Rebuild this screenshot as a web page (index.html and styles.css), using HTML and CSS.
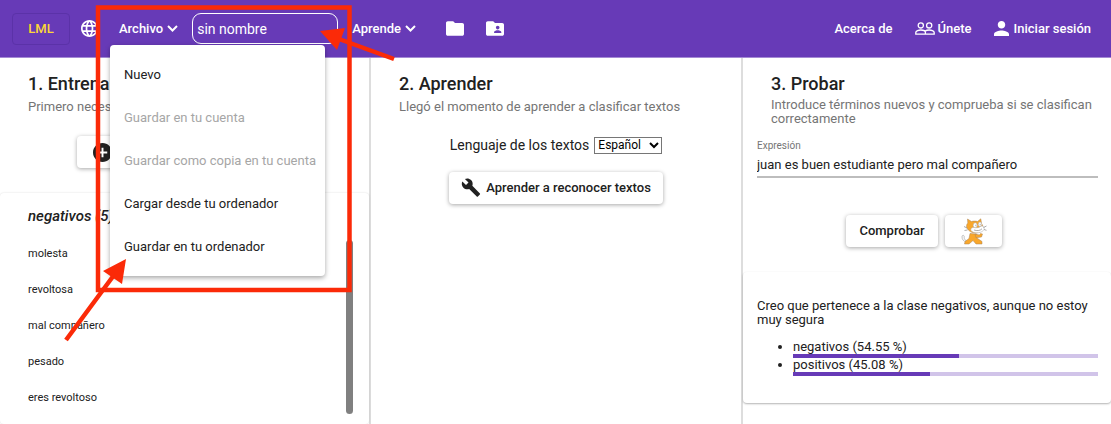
FILE: index.html
```html
<!DOCTYPE html>
<html lang="es">
<head>
<meta charset="utf-8">
<meta name="viewport" content="width=device-width, initial-scale=1">
<title>LML</title>
<link rel="stylesheet" href="styles.css">
</head>
<body>
<div class="page">
  <header class="topbar">
    <nav class="nav nav-main">
      <button class="logo" type="button">LML</button>
      <button class="icon-btn globe-btn" type="button" aria-label="Idioma">
        <svg class="globe" viewBox="2 2 20 20"><path d="M11.99 2C6.47 2 2 6.48 2 12s4.47 10 9.99 10C17.52 22 22 17.52 22 12S17.52 2 11.99 2zm6.93 6h-2.95a15.65 15.65 0 0 0-1.38-3.56A8.03 8.03 0 0 1 18.92 8zM12 4.04c.83 1.2 1.48 2.53 1.91 3.96h-3.82c.43-1.43 1.08-2.76 1.91-3.96zM4.26 14C4.1 13.36 4 12.69 4 12s.1-1.36.26-2h3.38c-.08.66-.14 1.32-.14 2s.06 1.34.14 2H4.26zm.82 2h2.95c.32 1.25.78 2.45 1.38 3.56A7.987 7.987 0 0 1 5.08 16zm2.95-8H5.08a7.987 7.987 0 0 1 4.33-3.56A15.65 15.65 0 0 0 8.03 8zM12 19.96c-.83-1.2-1.48-2.53-1.91-3.96h3.82c-.43 1.43-1.08 2.76-1.91 3.96zM14.34 14H9.66c-.09-.66-.16-1.32-.16-2s.07-1.35.16-2h4.68c.09.65.16 1.32.16 2s-.07 1.34-.16 2zm.25 5.56c.6-1.11 1.06-2.31 1.38-3.56h2.95a8.03 8.03 0 0 1-4.33 3.56zM16.36 14c.08-.66.14-1.32.14-2s-.06-1.34-.14-2h3.38c.16.64.26 1.31.26 2s-.1 1.36-.26 2h-3.38z"/></svg>
      </button>
      <div class="dropdown">
        <button class="nav-btn" type="button" aria-expanded="true">Archivo
          <svg class="chevron" viewBox="0 0 11 7"><path d="M1 1l4.500 4.500L10 1"/></svg>
        </button>
        <div class="menu">
          <button class="menu-item" type="button">Nuevo</button>
          <button class="menu-item" type="button" disabled>Guardar en tu cuenta</button>
          <button class="menu-item" type="button" disabled>Guardar como copia en tu cuenta</button>
          <button class="menu-item" type="button">Cargar desde tu ordenador</button>
          <button class="menu-item" type="button">Guardar en tu ordenador</button>
        </div>
      </div>
      <input class="name-input" type="text" value="sin nombre" aria-label="Nombre">
      <button class="nav-btn" type="button">Aprende
        <svg class="chevron" viewBox="0 0 11 7"><path d="M1 1l4.500 4.500L10 1"/></svg>
      </button>
      <button class="icon-btn folder-btn" type="button" aria-label="Carpeta">
        <svg class="folder" viewBox="2 4 20 16"><path d="M10 4H4c-1.1 0-2 .9-2 2v12c0 1.1.9 2 2 2h16c1.1 0 2-.9 2-2V8c0-1.1-.9-2-2-2h-8l-2-2z"/></svg>
      </button>
      <button class="icon-btn" type="button" aria-label="Carpeta compartida">
        <svg class="folder" viewBox="2 4 20 16"><path d="M20 6h-8l-2-2H4c-1.1 0-2 .9-2 2v12c0 1.1.9 2 2 2h16c1.1 0 2-.9 2-2V8c0-1.1-.9-2-2-2zm-5 3c1.1 0 2 .9 2 2s-.9 2-2 2-2-.9-2-2 .9-2 2-2zm4 8h-8v-1c0-1.33 2.67-2 4-2s4 .67 4 2v1z"/></svg>
      </button>
    </nav>
    <nav class="nav nav-user">
      <a class="nav-link" href="#">Acerca de</a>
      <a class="nav-link join" href="#">
        <svg class="people" viewBox="0 0 20 13"><circle cx="5.8" cy="3.4" r="2.6"/><circle cx="14.2" cy="3.4" r="2.6"/><path d="M.8 12.2v-1.600c0-1.800 3-2.600 5-2.600s4.600.8 4.600 2.600v1.600zM10.400 12.200h8.800v-1.600c0-1.800-3-2.600-5-2.600-1.500 0-3.200.5-4.200 1.300"/></svg>
        Únete</a>
      <a class="nav-link login" href="#">
        <svg class="person" viewBox="4 4 16 16"><path d="M12 12c2.210 0 4-1.790 4-4s-1.790-4-4-4-4 1.790-4 4 1.790 4 4 4zm0 2c-2.670 0-8 1.340-8 4v2h16v-2c0-2.660-5.330-4-8-4z"/></svg>
        Iniciar sesión</a>
    </nav>
  </header>

  <main class="columns">
    <section class="column">
      <div class="heading">
        <h2 class="title">1. Entrenar</h2>
        <p class="subtitle">Primero necesitas</p>
      </div>
      <div class="add-row">
        <button class="btn add-btn" type="button" aria-label="Añadir">
          <svg class="plus" viewBox="2 2 20 20"><path d="M12 2C6.480 2 2 6.480 2 12s4.480 10 10 10 10-4.480 10-10S17.520 2 12 2zm5 11h-4v4h-2v-4H7v-2h4V7h2v4h4v2z"/></svg>
        </button>
      </div>
      <div class="card samples">
        <h3 class="class-name">negativos (5)</h3>
        <div class="sample-area">
          <ul class="sample-list">
            <li>molesta</li>
            <li>revoltosa</li>
            <li>mal compañero</li>
            <li>pesado</li>
            <li>eres revoltoso</li>
          </ul>
          <div class="scroll-thumb"></div>
        </div>
      </div>
    </section>

    <section class="column">
      <div class="heading">
        <h2 class="title">2. Aprender</h2>
        <p class="subtitle">Llegó el momento de aprender a clasificar textos</p>
      </div>
      <div class="language">
        <label for="lang">Lenguaje de los textos</label>
        <span class="select-wrap">
          <select class="select" id="lang"><option>Español</option></select>
          <svg class="select-arrow" viewBox="0 0 10 7"><path d="M1 1l4 4 4-4"/></svg>
        </span>
      </div>
      <div class="learn-row">
        <button class="btn learn-btn" type="button">
          <svg class="wrench" viewBox="0 1 24 23"><path d="M22.700 19l-9.100-9.100c.9-2.300.4-5-1.500-6.900-2-2-5-2.400-7.400-1.300L9 6 6 9 1.600 4.700C.4 7.100.9 10.100 2.900 12.100c1.900 1.900 4.600 2.400 6.900 1.500l9.100 9.100c.4.4 1 .4 1.400 0l2.300-2.300c.5-.4.5-1.100.1-1.400z"/></svg>
          Aprender a reconocer textos
        </button>
      </div>
    </section>

    <section class="column">
      <div class="heading heading-long">
        <h2 class="title">3. Probar</h2>
        <p class="subtitle">Introduce términos nuevos y comprueba si se clasifican correctamente</p>
      </div>
      <div class="field">
        <label class="field-label" for="expr">Expresión</label>
        <input class="field-input" id="expr" type="text" value="juan es buen estudiante pero mal compañero">
      </div>
      <div class="check-row">
        <button class="btn check-btn" type="button">Comprobar</button>
        <button class="btn cat-btn" type="button" aria-label="Scratch">
          <svg class="cat" viewBox="0 0 26 27">
            <path class="tail" d="M7.500 23C4 23 3 21 3.200 19c.3-2-2.200-2.300-2.200-.2 0 2.700 1.500 4.700 5 5.500z"/>
            <path class="fur" d="M9 15.500l6.500.5.5 4 5 3.500v2.500h-6l-3-3.500L8 26H3.500l.5-2.500 4-3z"/>
            <path class="fur" d="M14 16l4.500 1 1-1.500 2 .5-1 3-5.500.8z"/>
            <path class="fur" d="M6.500 1l4 2.500c2-.6 4-.6 6 0L19.800.800l.8 5c2.400 2.800 1.900 6.700-1.600 8.200-4 1.700-9 1-11.600-2C5 9.500 5 7 6.800 5z"/>
            <path class="white" d="M13 9.500c-3-.3-4.200 2.300-2 4 3.200 2.400 10.500 1.500 12-2 .8-2.500-1-3.800-3-3.300-2 1.600-4 1.800-7 1.300z"/>
            <ellipse class="white" cx="14.200" cy="7.200" rx="2" ry="2.500"/>
            <ellipse class="white" cx="19" cy="6.300" rx="1.700" ry="2.300"/>
            <path class="line" d="M13 12c3 1 6 .8 8-1.200M22.500 9.500l3-1.500M23 11.500l2.500.8M6 10L3 8.500M6.500 12l-3 .5M14.800 6.700v1.500M19.200 5.800v1.500"/>
          </svg>
        </button>
      </div>
      <div class="card result">
        <p class="result-text">Creo que pertenece a la clase negativos, aunque no estoy muy segura</p>
        <ul class="result-list">
          <li>negativos (54.55 %)<div class="bar"><div class="bar-fill" style="width:54.55%"></div></div></li>
          <li>positivos (45.08 %)<div class="bar"><div class="bar-fill" style="width:45.08%"></div></div></li>
        </ul>
      </div>
    </section>
  </main>

  <svg class="annotation" width="400" height="345" viewBox="0 0 400 345" aria-hidden="true">
    <rect x="98" y="7.500" width="251.500" height="282.500"/>
    <path d="M394 59L339 39M66 340l48-65"/>
    <path class="head" d="M320 31l25-3-8 22zM126 259l-23 12 19 13z"/>
  </svg>
</div>
</body>
</html>
```
FILE: styles.css
```css
* {
  box-sizing: border-box;
}

body {
  margin: 0;
  background: #fff;
  color: #212121;
  font-family: Roboto, "Liberation Sans", sans-serif;
  font-size: 13px;
  line-height: 14px;
}

h2, h3, p, ul {
  margin: 0;
}

button, input, select {
  margin: 0;
  font: inherit;
  color: inherit;
}

button {
  border: 0;
  padding: 0;
  background: none;
}

svg {
  display: block;
  flex: none;
}

.page {
  position: relative;
  display: flex;
  flex-direction: column;
  min-height: 100vh;
}

/* Top bar */
.topbar {
  display: flex;
  justify-content: space-between;
  height: 58px;
  padding: 0 20px 0 12px;
  border-bottom: 1px solid #a48ad4;
  background: #673ab7;
  color: #fff;
  font-weight: 500;
}

.nav {
  display: flex;
  align-items: center;
}

.logo {
  width: 58px;
  height: 32px;
  border: 1px solid #5b32a8;
  border-radius: 4px;
  color: #fdd835;
}

.icon-btn svg {
  fill: #fff;
}

.globe-btn {
  margin: 0 21px 0 11px;
}

.globe {
  width: 17px;
  height: 17px;
}

.dropdown {
  position: relative;
}

.nav-btn {
  display: flex;
  align-items: center;
  gap: 4px;
}

.chevron {
  width: 11px;
  height: 7px;
  fill: none;
  stroke: #fff;
  stroke-width: 2;
}

.name-input {
  width: 146px;
  height: 31px;
  margin: 0 14px;
  padding: 0 4px;
  border: 1px solid #fff;
  border-radius: 9px;
  background: transparent;
  font-size: 14px;
  font-weight: 400;
}

.folder-btn {
  margin: 0 22px 0 30px;
}

.folder {
  width: 18px;
  height: 15px;
}

.nav-user {
  gap: 22px;
}

.nav-link {
  display: flex;
  align-items: center;
  color: inherit;
  text-decoration: none;
}

.join {
  gap: 3px;
}

.login {
  gap: 5px;
}

.people {
  width: 20px;
  height: 13px;
  fill: none;
  stroke: #fff;
  stroke-width: 1.3;
}

.person {
  width: 15px;
  height: 15px;
  fill: #fff;
}

.menu {
  position: absolute;
  z-index: 2;
  top: 23px;
  left: -9px;
  display: flex;
  flex-direction: column;
  width: 215px;
  padding: 9px 0 7px;
  border-radius: 4px;
  background: #fff;
  box-shadow: 0 2px 5px rgba(0, 0, 0, .35);
}

.menu-item {
  height: 43px;
  padding: 0 14px;
  color: #212121;
  font-weight: 400;
  text-align: left;
  white-space: nowrap;
}

.menu-item:disabled {
  color: #a6a6a6;
}

/* Columns */
.columns {
  flex: 1;
  display: grid;
  grid-template-columns: 371fr 372fr 368fr;
}

.column {
  display: flex;
  flex-direction: column;
  min-width: 0;
  border-right: 2px solid #ddd;
}

.column:last-child {
  border-right: 0;
}

.heading {
  padding: 15px 15px 0 28px;
}

.title {
  font-size: 18px;
  font-weight: 500;
  line-height: 22px;
}

.subtitle {
  margin-top: 5px;
  color: #757575;
}

.heading-long .subtitle {
  margin-top: 3px;
}

.btn {
  display: flex;
  align-items: center;
  justify-content: center;
  height: 32px;
  border-radius: 4px;
  background: #fff;
  font-weight: 500;
  box-shadow: 0 1px 4px rgba(0, 0, 0, .35);
}

.card {
  border-radius: 4px;
  box-shadow: 0 1px 2px rgba(0, 0, 0, .3);
}

/* Training */
.add-row {
  display: flex;
  justify-content: center;
  margin-top: 22px;
}

.add-btn {
  justify-content: flex-start;
  width: 216px;
  padding: 0 16px;
}

.plus {
  width: 19px;
  height: 19px;
  fill: #212121;
}

.samples {
  flex: 1;
  margin-top: 25px;
  padding: 14px 16px 8px 28px;
  box-shadow: 0 0 2px rgba(0, 0, 0, .15);
}

.class-name {
  font-size: 15px;
  font-style: italic;
  font-weight: 500;
  line-height: 18px;
}

.sample-area {
  display: flex;
  justify-content: space-between;
  margin-top: 11px;
}

.sample-list {
  padding: 0;
  list-style: none;
  font-size: 11px;
  line-height: 36px;
}

.scroll-thumb {
  width: 7px;
  margin: 4px 0 2px;
  border-radius: 4px;
  background: #808080;
}

/* Learning */
.language {
  display: flex;
  align-items: center;
  justify-content: center;
  gap: 5px;
  margin-top: 22px;
  font-size: 14px;
  line-height: 18px;
}

.select-wrap {
  position: relative;
}

.select {
  display: block;
  width: 68px;
  height: 17px;
  padding: 0 3px;
  border: 1px solid #767676;
  border-radius: 0;
  appearance: none;
  background: #fff;
  color: #000;
  font-size: 12px;
  line-height: 14px;
}

.select-arrow {
  position: absolute;
  top: 5px;
  right: 3px;
  width: 10px;
  height: 7px;
  fill: none;
  stroke: #000;
  stroke-width: 2;
  pointer-events: none;
}

.learn-row {
  display: flex;
  justify-content: center;
  margin-top: 18px;
}

.learn-btn {
  gap: 5px;
  padding: 0 12px;
}

.wrench {
  width: 20px;
  height: 20px;
  fill: #212121;
}

/* Testing */
.field {
  display: flex;
  flex-direction: column;
  margin: 13px 13px 0 14px;
}

.field-label {
  color: #757575;
  font-size: 10px;
}

.field-input {
  height: 25px;
  padding: 0;
  border: 0;
  border-bottom: 2px solid #bdbdbd;
  background: none;
}

.check-row {
  display: flex;
  justify-content: center;
  gap: 7px;
  margin-top: 37px;
  padding-right: 6px;
}

.check-btn {
  width: 92px;
}

.cat-btn {
  width: 57px;
}

.cat {
  width: 26px;
  height: 27px;
}

.fur {
  fill: #f9a72b;
  stroke: #a8845a;
  stroke-width: .5;
}

.tail {
  fill: #fff;
  stroke: #999;
  stroke-width: .6;
}

.white {
  fill: #fff;
  stroke: #aaa;
  stroke-width: .5;
}

.line {
  fill: none;
  stroke: #777;
  stroke-width: .6;
}

.result {
  margin-top: 25px;
  padding: 27px 13px 27px 14px;
}

.result-list {
  margin-top: 13px;
  padding-left: 36px;
}

.bar {
  height: 4px;
  background: #d1c4e9;
}

.bar-fill {
  height: 100%;
  background: #673ab7;
}

.annotation {
  position: absolute;
  z-index: 3;
  top: 0;
  left: 0;
  fill: none;
  stroke: #fb2a08;
  stroke-width: 4.500;
  pointer-events: none;
}

.head {
  fill: #fb2a08;
  stroke: none;
}
```
